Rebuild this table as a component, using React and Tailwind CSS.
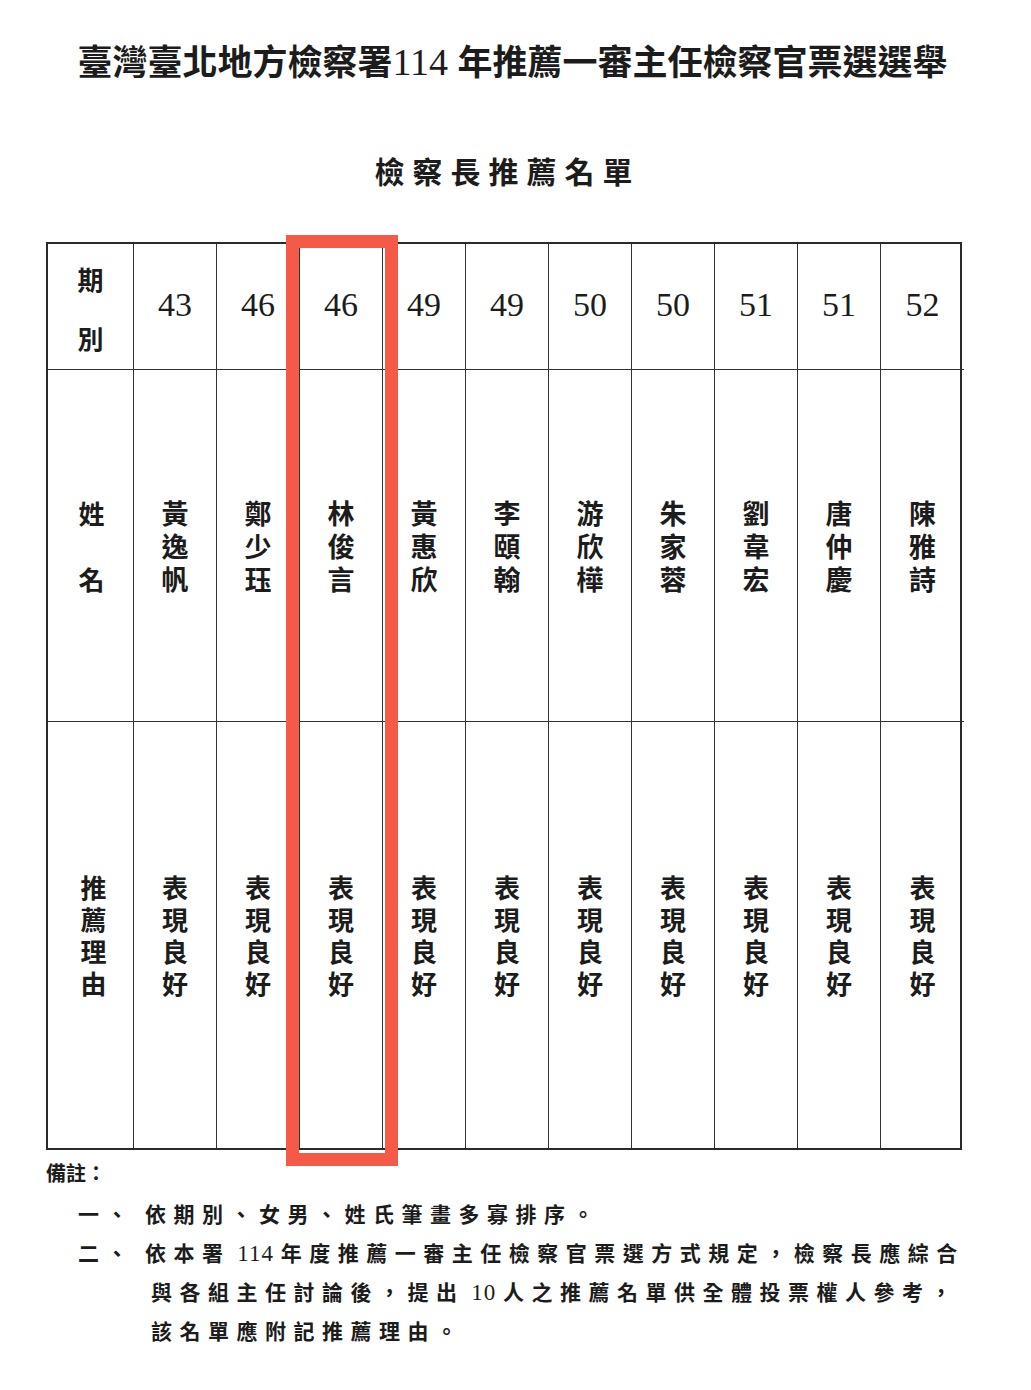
// Recommendation list sheet: title, subtitle, 11-column table with a red highlight box, footnotes.

const CJK = "font-['Noto_Sans_CJK_TC','Noto_Sans_CJK_SC',sans-serif]"
const NUM = "font-['Liberation_Serif',serif]"

const CANDIDATES = [
  { term: "43", name: "黃逸帆" },
  { term: "46", name: "鄭少珏" },
  { term: "46", name: "林俊言" },
  { term: "49", name: "黃惠欣" },
  { term: "49", name: "李頤翰" },
  { term: "50", name: "游欣樺" },
  { term: "50", name: "朱家蓉" },
  { term: "51", name: "劉韋宏" },
  { term: "51", name: "唐仲慶" },
  { term: "52", name: "陳雅詩" },
]

function Stack({ chars, className }) {
  return (
    <div className={`flex flex-col items-center ${className}`}>
      {chars.map((c, i) => (
        <span key={i}>{c}</span>
      ))}
    </div>
  )
}

export default function App() {
  return (
    <div className={`w-[1031px] h-[1390px] bg-white text-[#1c1c1c] ${CJK} font-bold overflow-hidden`}>
      {/* title */}
      <div className="pt-[38px] flex justify-center text-[35px] leading-[44px] pr-[6px]">
        <span>臺灣臺北地方檢察署<span className={`${NUM} font-normal text-[38px]`}>114 </span>年推薦一審主任檢察官票選選舉</span>
      </div>
      <div className="mt-[68px] flex justify-center text-[30px] leading-[36px] tracking-[8px] pr-[16px]">
        檢察長推薦名單
      </div>

      {/* table */}
      <div className="relative mt-[54px] ml-[46px] w-[916px]">
        <div className="grid grid-cols-[86px_repeat(10,83px)] grid-rows-[126px_352px_426px] border-[2.5px] border-[#2a2a2a]">
          <div className="border-r border-b border-[#333] flex items-center justify-center">
            <Stack chars={["期", "別"]} className="text-[26px] leading-[26px] gap-[33px] pt-[4px]" />
          </div>
          {CANDIDATES.map((c, i) => (
            <div
              key={"t" + i}
              className={`border-b border-[#333] ${i < 9 ? "border-r" : ""} flex items-center justify-center ${NUM} font-normal text-[34px] leading-none pb-[4px]`}
            >
              {c.term}
            </div>
          ))}

          <div className="border-r border-b border-[#333] flex items-center justify-center">
            <Stack chars={["姓", "\u3000", "名"]} className="text-[26px] leading-[33px] pl-[2px]" />
          </div>
          {CANDIDATES.map((c, i) => (
            <div key={"n" + i} className={`border-b border-[#333] ${i < 9 ? "border-r" : ""} flex items-center justify-center`}>
              <Stack chars={c.name.split("")} className="text-[27px] leading-[33px]" />
            </div>
          ))}

          <div className="border-r border-[#333] flex items-center justify-center">
            <Stack chars={["推", "薦", "理", "由"]} className="text-[26px] leading-[32px] pl-[6px]" />
          </div>
          {CANDIDATES.map((c, i) => (
            <div key={"r" + i} className={`${i < 9 ? "border-r" : ""} border-[#333] flex items-center justify-center`}>
              <Stack chars={["表", "現", "良", "好"]} className="text-[26px] leading-[32px]" />
            </div>
          ))}
        </div>

        {/* red highlight box */}
        <div className="absolute left-[240px] top-[-7px] w-[112px] h-[931px] border-[13px] border-[#f55a48] pointer-events-none" />
      </div>

      {/* notes */}
      <div className="mt-[8px] ml-[46px] text-[20px] leading-[30px]">備註：</div>
      <div className="ml-[78px] mt-[6px] text-[21px] tracking-[7.5px] leading-[39px]">
        <div className="flex">
          <span className="w-[67px] shrink-0">一、</span>
          <span>依期別、女男、姓氏筆畫多寡排序。</span>
        </div>
        <div className="flex">
          <span className="w-[67px] shrink-0">二、</span>
          <div>
            <div className="h-[39px]">依本署<span className={`${NUM} font-normal text-[23px] leading-none tracking-[1px]`}> 114 </span>年度推薦一審主任檢察官票選方式規定，檢察長應綜合</div>
            <div className="h-[39px] pl-[6px]">與各組主任討論後，提出<span className={`${NUM} font-normal text-[23px] leading-none tracking-[1px]`}> 10 </span>人之推薦名單供全體投票權人參考，</div>
            <div className="h-[39px] pl-[6px]">該名單應附記推薦理由。</div>
          </div>
        </div>
      </div>
    </div>
  )
}
